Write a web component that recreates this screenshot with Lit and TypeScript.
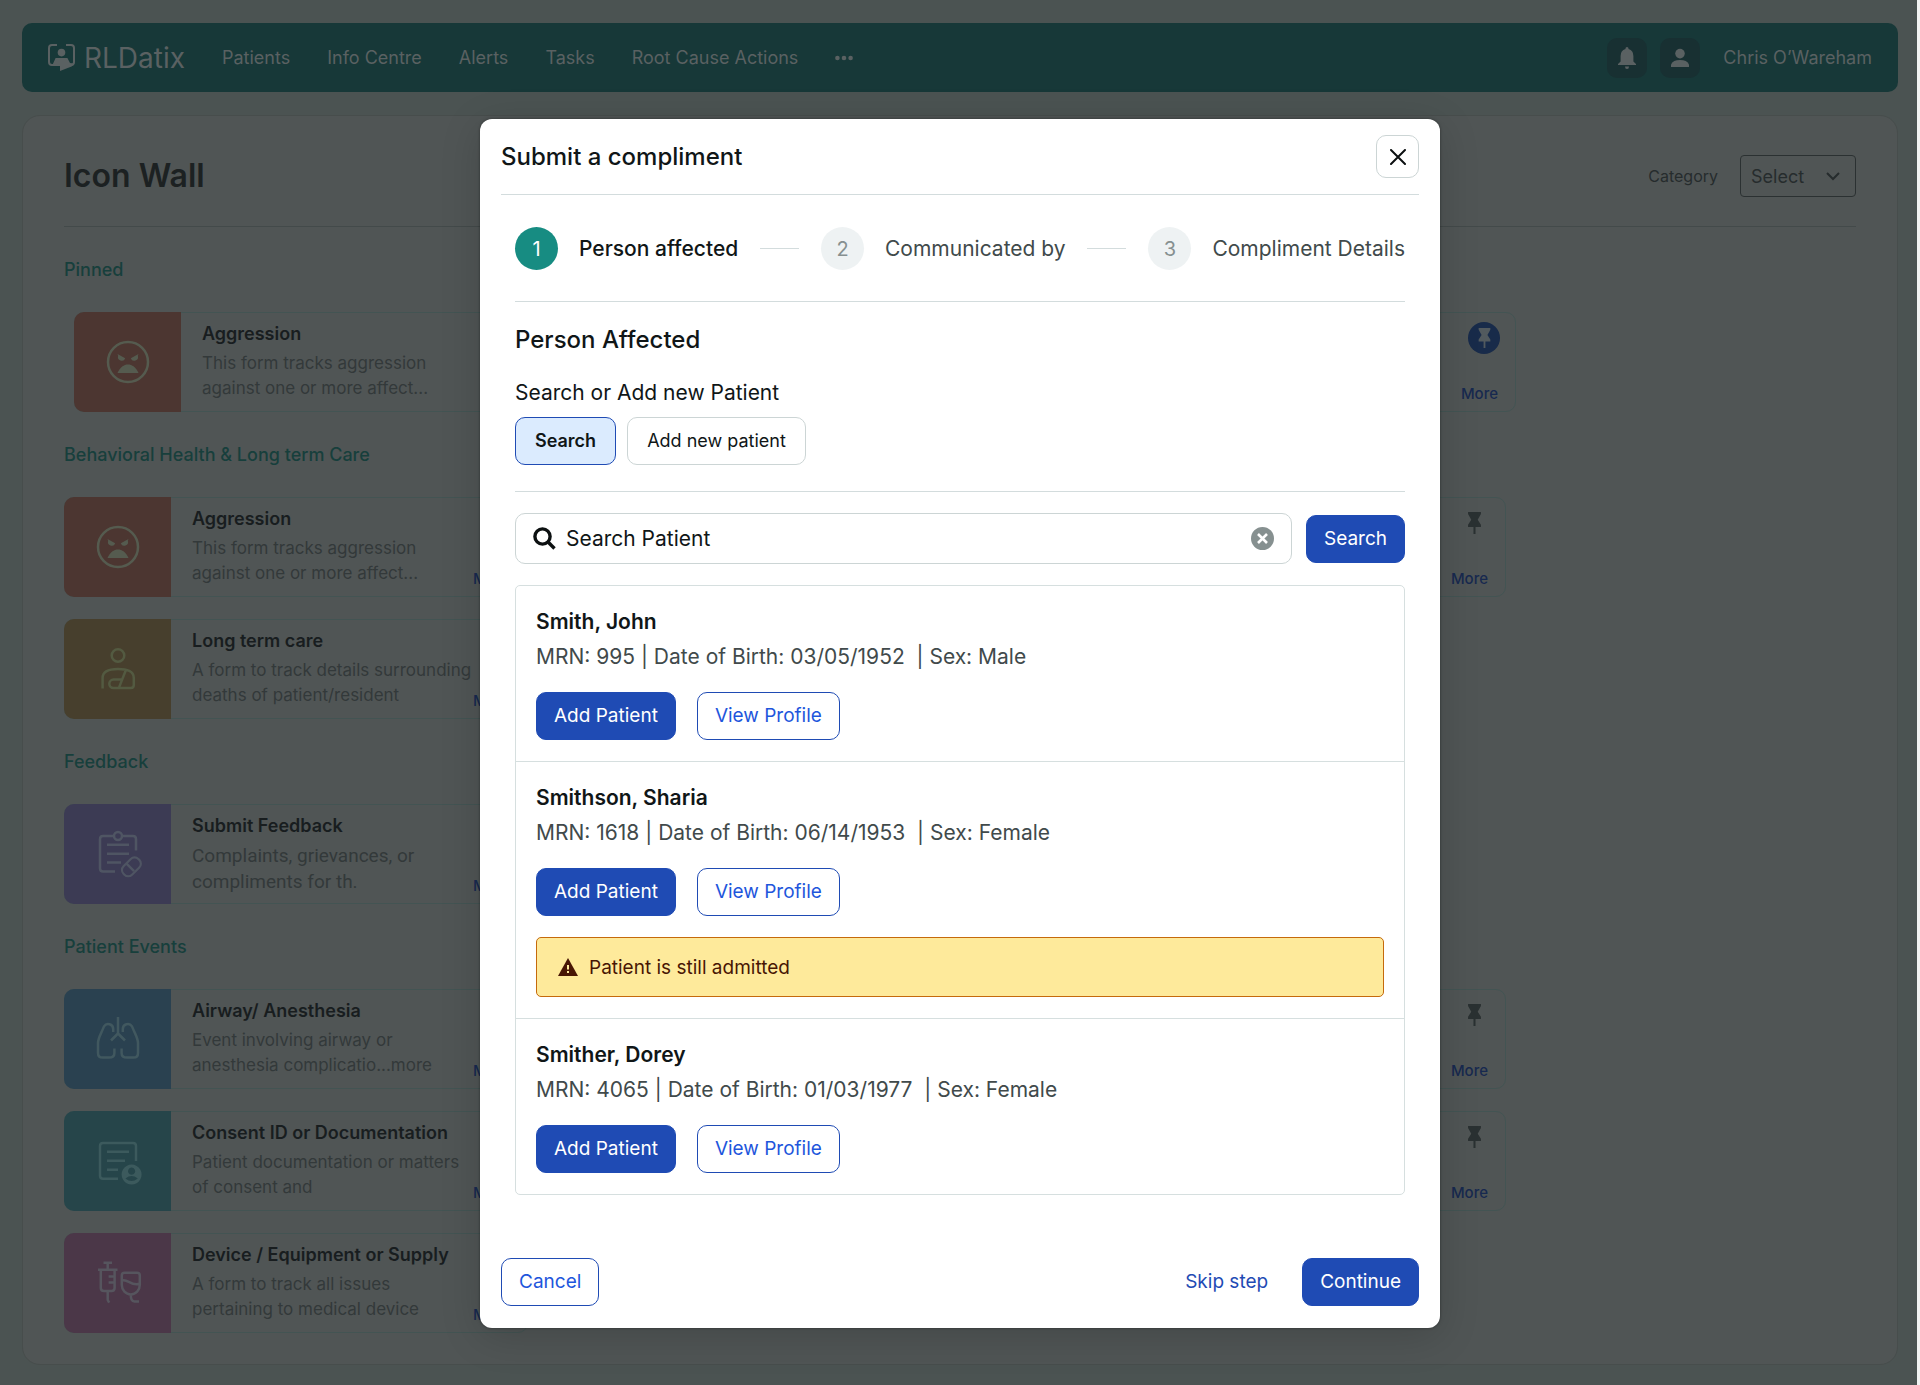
import { LitElement, html, svg, css, nothing } from "lit";
import { customElement, property, state } from "lit/decorators.js";
import { classMap } from "lit/directives/class-map.js";

type IconName = "face" | "person" | "clipboard" | "lungs" | "document" | "syringe";

interface Tile {
  title: string;
  lines: [string, string];
  icon: IconName;
  tone: string;
  trailing: boolean;
}

interface Section {
  name: string;
  pinned: boolean;
  tiles: Tile[];
}

interface Patient {
  name: string;
  mrn: string;
  dob: string;
  sex: string;
  alert?: string;
}

const SECTIONS: Section[] = [
  {
    name: "Pinned",
    pinned: true,
    tiles: [
      { title: "Aggression", lines: ["This form tracks aggression", "against one or more affect..."], icon: "face", tone: "red", trailing: true },
    ],
  },
  {
    name: "Behavioral Health & Long term Care",
    pinned: false,
    tiles: [
      { title: "Aggression", lines: ["This form tracks aggression", "against one or more affect..."], icon: "face", tone: "red", trailing: true },
      { title: "Long term care", lines: ["A form to track details surrounding", "deaths of patient/resident"], icon: "person", tone: "amber", trailing: false },
    ],
  },
  {
    name: "Feedback",
    pinned: false,
    tiles: [
      { title: "Submit Feedback", lines: ["Complaints, grievances, or", "compliments for th."], icon: "clipboard", tone: "purple", trailing: false },
    ],
  },
  {
    name: "Patient Events",
    pinned: false,
    tiles: [
      { title: "Airway/ Anesthesia", lines: ["Event involving airway or", "anesthesia complicatio...more"], icon: "lungs", tone: "blue", trailing: true },
      { title: "Consent ID or Documentation", lines: ["Patient documentation or matters", "of consent and"], icon: "document", tone: "teal", trailing: true },
      { title: "Device / Equipment or Supply", lines: ["A form to track all issues", "pertaining to medical device"], icon: "syringe", tone: "pink", trailing: false },
    ],
  },
];

const PATIENTS: Patient[] = [
  { name: "Smith, John", mrn: "995", dob: "03/05/1952", sex: "Male" },
  { name: "Smithson, Sharia", mrn: "1618", dob: "06/14/1953", sex: "Female", alert: "Patient is still admitted" },
  { name: "Smither, Dorey", mrn: "4065", dob: "01/03/1977", sex: "Female" },
];

const STEPS = ["Person affected", "Communicated by", "Compliment Details"];
const NAV = ["Patients", "Info Centre", "Alerts", "Tasks", "Root Cause Actions"];

const ICONS = {
  face: svg`
    <circle cx="0" cy="0" r="20" />
    <path class="solid" d="M-10.5-8 L-2.8-3.8 A3.7 3.7 0 1 1 -9.8-6.2 Z M10.5-8 L2.8-3.8 A3.7 3.7 0 1 0 9.8-6.2 Z" />
    <path class="solid" d="M-10.5 11 C-8 5 -4 2.4 0 2.4 S8 5 10.5 11 Z" />`,
  person: svg`
    <circle cx="0" cy="-13.5" r="6.3" />
    <path d="M-15.4 19.5 V9 C-15.4 2-9 0 0 0 S15.8 2 15.8 9 V16 Q15.8 19 12.8 19 H-4.5 A4.2 4.2 0 0 1 -4.5 10.6 H3.6 M7.8 1.2 L1 18.6" />`,
  clipboard: svg`
    <path d="M-3 17.5 H-15 Q-18 17.5-18 14.5 V-15 Q-18-18-15-18 H-4 A4 4 0 0 1 4-18 H15 Q18-18 18-15 V-3.5" />
    <path d="M-4-18 A4 4 0 0 0 4-18" />
    <path d="M-11-9.3 H11 M-11-0.3 H11 M-11 8.5 H3" />
    <rect x="-7" y="-12.2" width="14" height="24.4" rx="6.2" transform="translate(13.4 12.8) rotate(45) scale(.86)" />
    <path d="M9.2 8.8 L17.4 17" transform="translate(-1 .4) scale(.98)" />`,
  lungs: svg`
    <path d="M0-22 V-6 M-7 1.5 L0-5.5 L7 1.5" />
    <path d="M-4.8-7 V-10 A5 5 0 0 0 -14-12.6 C-17-5-20-1-20 4 V14 Q-20 18.6-15.5 18.6 H-9 Q-3.6 18.6-3.6 14 V9.5" />
    <path d="M4.8-7 V-10 A5 5 0 0 1 14-12.6 C17-5 20-1 20 4 V14 Q20 18.6 15.5 18.6 H9 Q3.6 18.6 3.6 14 V9.5" />`,
  document: svg`
    <path d="M0 17.8 H-15 Q-18 17.8-18 14.8 V-15 Q-18-18-15-18 H15 Q18-18 18-15 V0" />
    <path d="M-11-9.3 H11 M-11-0.3 H7 M-11 8.8 H0" />
    <path class="solid" fill-rule="evenodd" d="M13.6 3.6 a10 10 0 1 0 .01 0 Z M13.6 6.6 a3.6 3.6 0 1 1 -.01 0 Z M7.4 17.4 Q13.6 12.6 19.8 17.4 Q13.6 22.4 7.4 17.4 Z" />`,
  syringe: svg`
    <path d="M-14.5-20.2 H-6 M-10.3-20 V-14 M-20-13.2 H-.5 M-17.2-13 V5 Q-17.2 8-14 8 H-6.5 Q-3.4 8-3.4 5 V-13 M-10.3 8.4 V17 L-8.8 19.6 M-3.6-6.5 H-9.4 M-3.6-.5 H-9.4" />
    <path d="M3.8-7.5 Q3.8-10.2 6.6-10.2 H19 Q21.8-10.2 21.8-7.5 V2 A9 9.4 0 0 1 3.8 2 Z M4-2.4 C9-5 13 3.6 21.6.8 M12.8 11.6 Q12.6 18.4 16.4 18.4 H21" />`,
};

const pin = svg`<path d="M2.4 0 H17.6 V2.4 L13.8 9.2 L17.6 15 V17.6 H11.2 V26 H8.8 V17.6 H2.4 V15 L6.2 9.2 L2.4 2.4 Z" />`;

@customElement("tile-card")
class TileCard extends LitElement {
  @property({ attribute: false }) tile?: Tile;
  @property({ type: Boolean }) pinned = false;

  static styles = css`
    :host { display: block; }
    .card {
      box-sizing: border-box;
      display: flex;
      height: 100px;
      border: 1px solid #435453;
      border-radius: 10px;
    }
    .tile {
      display: flex;
      align-items: center;
      justify-content: center;
      flex: 0 0 107px;
      margin: -1px 0 -1px -1px;
      border-radius: 10px 0 0 10px;
    }
    .tile svg { width: 48px; height: 48px; fill: none; stroke: currentColor; stroke-width: 2.5; stroke-linejoin: round; overflow: visible; }
    .tile .solid { fill: currentColor; stroke: none; }
    .red { background: #4c3631; color: #555b4f; }
    .amber { background: #473f2d; color: #535a41; }
    .purple { background: #3c3b54; color: #4f5563; }
    .blue { background: #2a4150; color: #41585f; }
    .teal { background: #26454a; color: #3c5a5d; }
    .pink { background: #4b3748; color: #56555e; }
    .copy { flex: 1; min-width: 0; padding: 9px 0 0 21px; white-space: nowrap; }
    h3 { margin: 0; font-size: 18px; line-height: 24px; font-weight: 600; color: #181d1f; }
    p { margin: 5px 0 0; font-size: 17px; line-height: 25px; color: #33393a; }
    .purple + .copy p { font-family: Roboto, Inter, sans-serif; font-size: 19px; line-height: 26px; }
    .side {
      display: flex;
      flex-direction: column;
      justify-content: space-between;
      align-items: flex-end;
      margin-left: auto;
      padding: 9px 17px 6px 0;
    }
    button {
      display: flex;
      align-items: center;
      justify-content: center;
      width: 32px;
      height: 32px;
      margin-right: -2px;
      padding: 0;
      border: 0;
      border-radius: 50%;
      background: none;
      color: #2a3132;
    }
    button svg { width: 17px; height: 22px; fill: currentColor; }
    .on { background: #182b4a; color: #525a5e; }
    .on svg { height: 20px; }
    a { font-size: 15px; line-height: 22px; font-weight: 500; color: #17294f; text-decoration: none; }
  `;

  render() {
    const t = this.tile;
    return html`<article class="card">
      ${t
        ? html`<div class="tile ${t.tone}"><svg viewBox="-24 -24 48 48" aria-hidden="true">${ICONS[t.icon]}</svg></div>
            <div class="copy"><h3>${t.title}</h3><p>${t.lines[0]}<br />${t.lines[1]}</p></div>`
        : nothing}
      ${t && this.pinned
        ? nothing
        : html`<div class="side">
            ${t
              ? html`<span></span>`
              : html`<button class=${classMap({ on: this.pinned })} aria-label="Pin"><svg viewBox="0 0 20 26">${pin}</svg></button>`}
            <a href="#">More</a>
          </div>`}
    </article>`;
  }
}

@customElement("compliment-dialog")
class ComplimentDialog extends LitElement {
  @state() private query = "Search Patient";

  static styles = css`
    :host { display: block; width: 100%; max-width: 960px; }
    .dialog {
      box-sizing: border-box;
      padding: 16px 21px 22px;
      border-radius: 12px;
      background: #fff;
      color: #101617;
      box-shadow: 0 8px 40px rgba(0, 0, 0, 0.16), 0 0 3px rgba(0, 0, 0, 0.4);
    }
    header { display: flex; align-items: center; justify-content: space-between; padding-bottom: 16px; border-bottom: 1px solid #d3dcdd; }
    h2, h3, h4, p { margin: 0; }
    h2 { font-size: 24px; line-height: 32px; font-weight: 500; }
    button { font: inherit; cursor: pointer; }
    .close {
      display: flex;
      align-items: center;
      justify-content: center;
      width: 43px;
      height: 43px;
      padding: 0;
      border: 1px solid #ccd5d5;
      border-radius: 10px;
      background: #fff;
    }
    .close svg { width: 16px; height: 16px; stroke: #0c1011; stroke-width: 2; stroke-linecap: round; }
    .body { padding: 0 14px; }
    .steps { display: flex; align-items: center; justify-content: space-between; margin: 0; padding: 32px 0 31px; list-style: none; border-bottom: 1px solid #d3dcdd; }
    .step { display: flex; align-items: center; gap: 21px; font-size: 21px; line-height: 28px; color: #414a4b; white-space: nowrap; }
    .dot { display: flex; align-items: center; justify-content: center; width: 43px; height: 43px; border-radius: 50%; background: #eef2f3; color: #869090; font-size: 20px; }
    .current { color: #101617; font-weight: 500; }
    .current .dot { background: #178c82; color: #fff; font-weight: 400; }
    .rule { width: 39px; height: 1px; background: #d3dcdd; }
    h3 { padding-top: 22px; font-size: 24px; line-height: 32px; font-weight: 500; }
    .chooser { margin: 0; padding: 0 0 26px; border: 0; border-bottom: 1px solid #d3dcdd; }
    .legend { padding: 23px 0 10px; font-size: 21px; line-height: 28px; }
    .row { display: flex; align-items: center; gap: 21px; }
    .toggles { gap: 11px; }
    .btn { box-sizing: border-box; height: 48px; padding: 0 17px; border: 1px solid #1f4bb4; border-radius: 10px; background: #fff; color: #1e56dc; font-size: 19px; line-height: 24px; white-space: nowrap; }
    .choice { padding: 0 19px; border-color: #ccd5d5; color: #101617; font-size: 18px; }
    .chosen { border-color: #1f4bb4; background: #dbebfe; font-weight: 600; }
    .primary { background: #1f4bb4; color: #fff; }
    .text { padding: 0; border-color: transparent; color: #1f4bb4; }
    .search { display: flex; align-items: center; gap: 14px; padding: 21px 0; }
    .field { box-sizing: border-box; display: flex; flex: 1; align-items: center; gap: 10px; height: 51px; padding: 0 17px; border: 1px solid #ccd5d5; border-radius: 10px; }
    .field label { display: flex; }
    .field input { flex: 1; min-width: 0; padding: 0; border: 0; outline: 0; background: none; color: #101617; font: inherit; font-size: 21px; line-height: 28px; }
    .glass { width: 23px; height: 23px; fill: none; stroke: #0c1011; stroke-width: 3.4; }
    .clear { display: flex; padding: 0; border: 0; background: none; }
    .clear svg { width: 23px; height: 23px; stroke: #fff; stroke-width: 2.6; }
    .list { margin: 0; padding: 0; list-style: none; border: 1px solid #d6dfdf; border-radius: 5px; }
    .patient { padding: 22px 20px 21px; }
    .patient + .patient { border-top: 1px solid #d6dfdf; }
    h4 { font-size: 21px; line-height: 28px; font-weight: 600; }
    .meta { padding: 7px 0 21px; font-size: 21px; line-height: 28px; color: #414a4b; white-space: pre; }
    .alert { box-sizing: border-box; display: flex; align-items: center; gap: 11px; height: 60px; margin-top: 21px; padding: 0 21px; border: 1px solid #c56a0c; border-radius: 5px; background: #feea9b; color: #481604; font-size: 19px; }
    .alert svg { width: 20px; height: 18px; }
    footer { display: flex; align-items: center; justify-content: space-between; padding-top: 63px; }
    footer .row { gap: 33px; }
  `;

  private onInput(e: Event) {
    this.query = (e.target as HTMLInputElement).value;
  }

  render() {
    return html`<section class="dialog" role="dialog" aria-labelledby="title">
      <header>
        <h2 id="title">Submit a compliment</h2>
        <button class="close" aria-label="Close"><svg viewBox="0 0 16 16"><path d="M1 1 L15 15 M15 1 L1 15" /></svg></button>
      </header>
      <div class="body">
        <ol class="steps">
          ${STEPS.map(
            (label, i) => html`${i ? html`<li class="rule" role="presentation"></li>` : nothing}
              <li class=${classMap({ step: true, current: i === 0 })}><span class="dot">${i + 1}</span>${label}</li>`,
          )}
        </ol>
        <h3>Person Affected</h3>
        <div class="chooser" role="group" aria-labelledby="legend">
          <p class="legend" id="legend">Search or Add new Patient</p>
          <div class="row toggles">
            <button class="btn choice chosen" aria-pressed="true">Search</button>
            <button class="btn choice" aria-pressed="false">Add new patient</button>
          </div>
        </div>
        <div class="search">
          <div class="field">
            <label for="query"><svg class="glass" viewBox="0 0 23 23" role="img" aria-label="Search"><circle cx="9.5" cy="9.5" r="7.6" /><path d="M14.8 14.8 L21.5 21.5" /></svg></label>
            <input id="query" type="text" .value=${this.query} @input=${this.onInput} />
            <button class="clear" aria-label="Clear" @click=${() => (this.query = "")}>
              <svg viewBox="0 0 23 23"><circle cx="11.5" cy="11.5" r="11.5" fill="#869090" stroke="none" /><path d="M7 7 L16 16 M16 7 L7 16" /></svg>
            </button>
          </div>
          <button class="btn primary">Search</button>
        </div>
        <ul class="list">
          ${PATIENTS.map(
            (p) => html`<li class="patient">
              <h4>${p.name}</h4>
              <p class="meta">${`MRN: ${p.mrn} | Date of Birth: ${p.dob}  | Sex: ${p.sex}`}</p>
              <div class="row">
                <button class="btn primary">Add Patient</button>
                <button class="btn">View Profile</button>
              </div>
              ${p.alert
                ? html`<div class="alert" role="status">
                    <svg viewBox="0 0 20 18" aria-hidden="true"><path fill="#481604" d="M10 0 L20 18 H0 Z" /><path fill="#feea9b" d="M9 7 H11 V11.4 H9 Z M9 13 H11 V15 H9 Z" /></svg>
                    ${p.alert}
                  </div>`
                : nothing}
            </li>`,
          )}
        </ul>
      </div>
      <footer>
        <button class="btn">Cancel</button>
        <div class="row">
          <button class="btn text">Skip step</button>
          <button class="btn primary">Continue</button>
        </div>
      </footer>
    </section>`;
  }
}

@customElement("app-root")
class AppRoot extends LitElement {
  static styles = css`
    :host { display: block; position: relative; font-family: Inter, "Liberation Sans", sans-serif; }
    .page { box-sizing: border-box; min-height: 100vh; padding: 23px 19px 22px 22px; border-right: 3px solid #f1f2f2; background: #4b5352; }
    .bar { display: flex; align-items: center; height: 69px; padding: 0 26px; border-radius: 10px; background: #173838; color: #5a6162; }
    .brand { display: flex; align-items: center; gap: 9px; margin-right: 37px; font-size: 28px; line-height: 36px; font-weight: 400; color: inherit; text-decoration: none; }
    .brand svg { width: 27px; height: 27px; }
    nav { display: flex; align-items: center; gap: 37px; }
    nav a { color: inherit; font-size: 18px; line-height: 24px; text-decoration: none; white-space: nowrap; }
    .dots { display: flex; padding: 0; border: 0; background: none; }
    .dots svg { width: 18px; height: 6px; fill: #5a6162; }
    .tools { display: flex; align-items: center; gap: 13px; margin-left: auto; }
    .tool { display: flex; align-items: center; justify-content: center; width: 40px; height: 40px; padding: 0; border: 0; border-radius: 10px; background: #183032; }
    .tool svg { width: 22px; height: 22px; fill: #5a6162; }
    .user { margin-left: 10px; font-size: 18px; line-height: 24px; }
    .panel { margin-top: 23px; padding: 39px 41px 31px; border: 1px solid #474d4c; border-radius: 18px; background: #505555; }
    .head { display: flex; align-items: center; justify-content: space-between; padding-bottom: 29px; border-bottom: 1px solid #434a4a; }
    h1 { margin: 0; font-size: 32px; line-height: 42px; font-weight: 600; color: #1c2122; }
    .filter { display: flex; align-items: center; gap: 22px; color: #262c2d; font-size: 16px; }
    .picker { display: grid; align-items: center; }
    .picker > * { grid-area: 1 / 1; }
    .picker svg { justify-self: end; width: 14px; height: 10px; margin-right: 16px; fill: none; stroke: #262c2d; stroke-width: 2; pointer-events: none; }
    select { box-sizing: border-box; appearance: none; width: 116px; height: 42px; padding: 0 10px; border: 1px solid #2b3132; border-radius: 4px; background: none; color: #262c2d; font: inherit; font-size: 18px; }
    h2 { margin: 30px 0 29px; font-size: 18px; line-height: 26px; font-weight: 500; color: #173f3c; }
    .grid { display: grid; grid-template-columns: repeat(3, 464px); gap: 22px 25px; }
    .grid.pinned { padding-left: 10px; }
    .first { grid-column: 1; }
    .last { grid-column: 3; }
    .backdrop { position: absolute; inset: 0; display: flex; justify-content: center; align-items: flex-start; padding-top: 119px; }
  `;

  render() {
    return html`<div class="page">
        <div class="bar">
          <a class="brand" href="#">
            <svg viewBox="0 0 27 27" aria-hidden="true">
              <path d="M9 1 H4 Q1 1 1 4 V18 Q1 21 4 21 H5 M18 1 H23 Q26 1 26 4 V18 Q26 20.4 24 21" fill="none" stroke="currentColor" stroke-width="2" />
              <circle cx="13.5" cy="8.6" r="3.8" fill="currentColor" />
              <path d="M7.6 14 H19.4 L22 19 L25.6 19.6 Q25.4 21.6 23.6 22.4 L12 27 V22 H4 Z" fill="currentColor" />
            </svg>RLDatix</a>
          <nav>
            ${NAV.map((n) => html`<a href="#">${n}</a>`)}
            <button class="dots" aria-label="More pages"><svg viewBox="0 0 18 6"><circle cx="2.4" cy="3" r="2.3" /><circle cx="9" cy="3" r="2.3" /><circle cx="15.6" cy="3" r="2.3" /></svg></button>
          </nav>
          <div class="tools">
            <button class="tool" aria-label="Notifications"><svg viewBox="0 0 22 22"><path d="M11 0 Q12.6 0 12.6 2 Q17.4 3.4 17.4 9 V14.6 L20 17 V18 H2 V17 L4.6 14.6 V9 Q4.6 3.4 9.4 2 Q9.4 0 11 0 Z M9 19.4 H13 Q13 22 11 22 T9 19.4 Z" /></svg></button>
            <button class="tool" aria-label="Account"><svg viewBox="0 0 22 22"><circle cx="11" cy="6.6" r="4.8" /><path d="M2 20 V17.4 Q4 13 11 13 T20 17.4 V20 Z" /></svg></button>
            <span class="user">Chris O’Wareham</span>
          </div>
        </div>
        <main class="panel">
          <div class="head">
            <h1>Icon Wall</h1>
            <div class="filter">
              <label for="category">Category</label>
              <div class="picker">
                <select id="category"><option>Select</option></select>
                <svg viewBox="0 0 14 10" aria-hidden="true"><path d="M1 2 L7 8 L13 2" /></svg>
              </div>
            </div>
          </div>
          ${SECTIONS.map(
            (s) => html`<section>
              <h2>${s.name}</h2>
              <div class=${classMap({ grid: true, pinned: s.pinned })}>
                ${s.tiles.map(
                  (t) => html`<tile-card class="first" .tile=${t} ?pinned=${s.pinned}></tile-card>
                    ${t.trailing ? html`<tile-card class="last" ?pinned=${s.pinned}></tile-card>` : nothing}`,
                )}
              </div>
            </section>`,
          )}
        </main>
      </div>
      <div class="backdrop"><compliment-dialog></compliment-dialog></div>`;
  }
}
